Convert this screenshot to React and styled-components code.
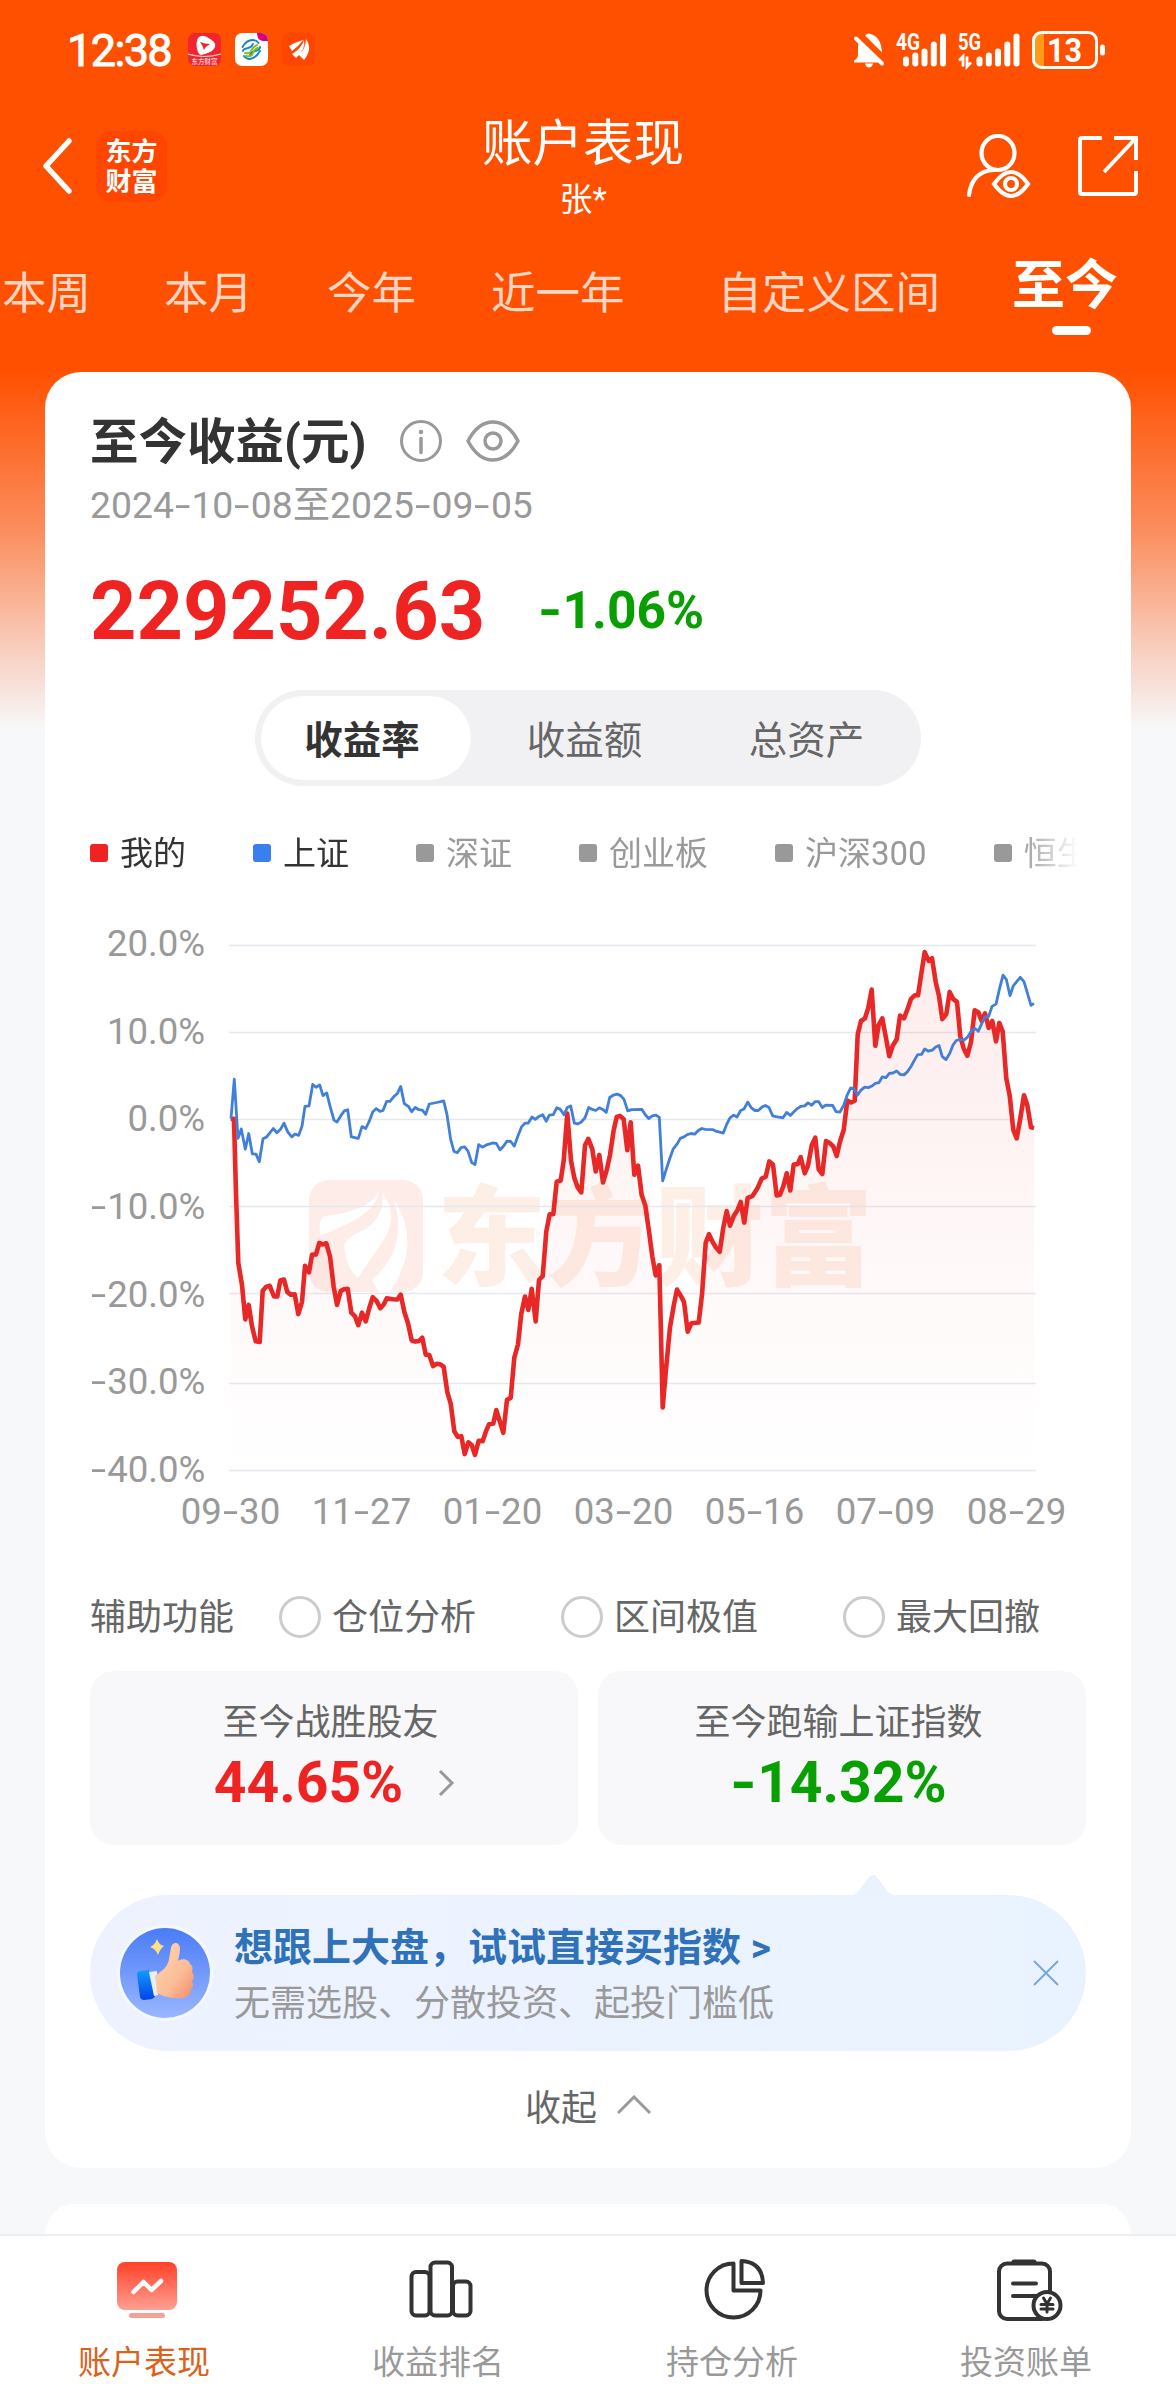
import React from 'react'
import styled, { createGlobalStyle } from 'styled-components'

const GlobalStyle=createGlobalStyle`
*{
    box-sizing:border-box;
}
body{
    margin:0;
    background:#f7f8fa;
    font-family:Roboto,'Noto Sans CJK SC',sans-serif;
}
svg{
    display:block;
    flex:none;
}
`
const Page=styled.div`
    display:flex;
    flex-direction:column;
    width:1176px;
    height:2400px;
    overflow:hidden;
    background:linear-gradient(#ff5000 370px,#fb8d5d 530px,#f8d5c8 662px,#f7f8fa 730px);
`
const StatusBar=styled.div`
    display:flex;
    align-items:center;
    justify-content:space-between;
    height:99px;
    padding:0 70px 0 67px;
    color:#fff;
`
const StatusGroup=styled.div`
    display:flex;
    align-items:center;
    gap:${props=>props.gap}px;
`
const Clock=styled.span`
    width:108px;
    font-size:45px;
    letter-spacing:-1.6px;
    -webkit-text-stroke:1px #fff;
    padding-top:1px;
`
const NavBar=styled.header`
    display:grid;
    grid-template-columns:1fr auto 1fr;
    align-items:center;
    height:134px;
    padding:0 37px 0 43px;
    color:#fff;
`
const NavSide=styled.div`
    display:flex;
    align-items:center;
    justify-content:${props=>props.end?'flex-end':'flex-start'};
    gap:${props=>props.end?46:22}px;
`
const Brand=styled.div`
    width:71px;
    height:71px;
    border-radius:15px;
    background:#ff4600;
    display:flex;
    flex-direction:column;
    align-items:center;
    justify-content:center;
    font-family:'Noto Sans CJK SC',sans-serif;
    font-size:26px;
    font-weight:700;
    line-height:30px;
    padding-bottom:2px;
`
const NavTitle=styled.div`
    display:flex;
    flex-direction:column;
    align-items:center;
    padding:12px 16px 0 0;
`
const Title=styled.h1`
    margin:0;
    font-size:50.500px;
    font-weight:400;
    line-height:58px;
`
const Subtitle=styled.span`
    margin-top:-2px;
    font-size:33px;
    line-height:58px;
`
const Tabs=styled.nav`
    display:flex;
    height:139px;
    padding:34px 0 0 2px;
    color:#ffd6c3;
    white-space:nowrap;
`
const Tab=styled.span`
    font-size:44.500px;
    line-height:54px;
    margin-right:${props=>props.space||74}px;
`
const ActiveTab=styled.span`
    display:flex;
    flex-direction:column;
    align-items:center;
    font-size:53px;
    font-weight:700;
    line-height:54px;
    margin-top:-8px;
    color:#fff;
    &::after{
        content:'';
        width:39px;
        height:9px;
        border-radius:5px;
        margin-top:13px;
        margin-left:13px;
        background:#fff;
    }
`
const Card=styled.section`
    display:flex;
    flex-direction:column;
    flex:none;
    height:1796px;
    margin:0 45px;
    padding:41px 45px 0;
    border-radius:36px;
    background:#fff;
`
const CardHead=styled.div`
    display:flex;
    align-items:center;
    height:56px;
    gap:24px;
`
const CardTitle=styled.h2`
    margin:-7px 10px 0 0;
    font-size:48.500px;
    font-weight:700;
    color:#333;
    white-space:nowrap;
`
const Period=styled.div`
    margin-top:11px;
    font-size:37.300px;
    line-height:50px;
    color:#999;
`
const Dash=styled.span`
    display:inline-block;
    width:.47em;
    text-align:center;
    transform:scaleX(${props=>props.bold?1.2:1.5});
`
const AmountRow=styled.div`
    display:flex;
    align-items:center;
    height:90px;
    margin-top:36px;
    gap:53px;
`
const Amount=styled.span`
    font-size:81px;
    font-weight:700;
    color:#f02323;
`
const Rate=styled.span`
    font-size:${props=>props.size}px;
    font-weight:700;
    line-height:1.2;
    color:${props=>props.up?'#f02323':'#08a000'};
`
const Segments=styled.div`
    display:flex;
    align-self:center;
    width:666px;
    height:96px;
    margin-top:34px;
    padding:6px;
    border-radius:48px;
    background:#f1f1f4;
`
const Segment=styled.div`
    display:flex;
    align-items:center;
    justify-content:center;
    width:${props=>props.active?210:222}px;
    padding:${props=>props.active?'0 8px 3px 0':'0 0 3px 5px'};
    border-radius:42px;
    font-size:38.500px;
    font-weight:${props=>props.active?700:400};
    color:${props=>props.active?'#333':'#666'};
    background:${props=>props.active?'#fff':'none'};
`
const Legend=styled.div`
    display:flex;
    align-items:center;
    gap:67px;
    height:50px;
    margin-top:42px;
    overflow:hidden;
    mask-image:linear-gradient(90deg,#000 930px,transparent 988px);
`
const LegendItem=styled.div`
    display:flex;
    align-items:center;
    flex:none;
    gap:12px;
    font-size:33px;
    line-height:46px;
    padding-top:2px;
    color:${props=>props.on?'#333':'#999'};
    &::before{
        content:'';
        width:18px;
        height:18px;
        margin-top:-2px;
        border-radius:3px;
        background:${props=>props.mark||'#999'};
    }
`
const Chart=styled.div`
    display:flex;
    height:570px;
    margin-top:44px;
`
const YAxis=styled.div`
    display:flex;
    flex-direction:column;
    justify-content:space-between;
    width:115px;
    text-align:right;
    font-size:36.600px;
    line-height:44px;
    color:#999;
    white-space:nowrap;
`
const XAxis=styled.div`
    display:grid;
    grid-template-columns:repeat(7,131px);
    margin-left:75px;
    text-align:center;
    font-size:36.600px;
    line-height:39px;
    height:38px;
    color:#999;
`
const Watermark=styled.text`
    font-family:'Noto Sans CJK SC',sans-serif;
    font-size:109px;
    font-weight:900;
    fill:#fdeee6;
`
const Tools=styled.div`
    display:flex;
    align-items:center;
    height:54px;
    margin-top:60px;
    font-size:36px;
    line-height:50px;
    color:#666;
`
const ToolsLabel=styled.span`
    flex:none;
    width:189px;
    padding-top:2px;
`
const Radio=styled.label`
    display:flex;
    align-items:center;
    flex:none;
    width:282px;
    gap:11px;
    padding-top:2px;
    white-space:nowrap;
    &:last-child{
        width:auto;
    }
    &::before{
        content:'';
        width:36px;
        height:36px;
        margin-top:-2px;
        border:3px solid #ccc;
        border-radius:50%;
    }
`
const Stats=styled.div`
    display:flex;
    gap:20px;
    margin-top:27px;
`
const Stat=styled.div`
    display:flex;
    flex-direction:column;
    align-items:center;
    flex:1;
    height:174px;
    padding:26px 7px 0 0;
    border-radius:24px;
    background:#f8f8fa;
    font-size:36px;
    line-height:52px;
    color:#666;
`
const StatValue=styled.div`
    display:flex;
    align-items:center;
    gap:35px;
    padding-left:8px;
`
const Banner=styled.div`
    position:relative;
    display:flex;
    align-items:center;
    height:156px;
    margin-top:50px;
    padding:0 27px 0 27px;
    border-radius:78px;
    background:linear-gradient(90deg,#eef2ff,#e9f3ff);
`
const Pointer=styled.svg`
    position:absolute;
    left:763px;
    top:-20px;
`
const BannerText=styled.div`
    flex:1;
    margin-left:21px;
    padding-top:7px;
`
const BannerTitle=styled.div`
    font-size:39px;
    font-weight:700;
    line-height:56px;
    color:#3072ba;
`
const BannerNote=styled.div`
    font-size:36px;
    line-height:57px;
    color:#999;
`
const Collapse=styled.div`
    display:flex;
    align-items:center;
    justify-content:center;
    height:60px;
    margin-top:24px;
    gap:20px;
    font-size:36px;
    color:#666;
`
const NextCard=styled.section`
    flex:none;
    height:30px;
    margin:36px 45px 0;
    border-radius:36px 36px 0 0;
    background:#fff;
`
const TabBar=styled.footer`
    display:grid;
    grid-template-columns:repeat(4,1fr);
    flex:1;
    border-top:2px solid #eee;
    background:#fff;
`
const TabItem=styled.div`
    display:flex;
    flex-direction:column;
    align-items:center;
    padding-top:18px;
    font-size:33px;
    line-height:48px;
    color:${props=>props.active?'#d9621c':'#999'};
    svg{
        overflow:visible;
    }
    span{
        margin:21px 6px 0 0;
    }
`

const tabs=[['本周',73],['本月'],['今年',75],['近一年',93],['自定义区间',72]]
const legend=[
    {name:'我的',mark:'#f02323',on:true},
    {name:'上证',mark:'#3a7fee',on:true},
    {name:'深证'},
    {name:'创业板'},
    {name:'沪深300'},
    {name:'恒生'}
]
const yLabels=['20.0%','10.0%','0.0%','-10.0%','-20.0%','-30.0%','-40.0%']
const xLabels=['09-30','11-27','01-20','03-20','05-16','07-09','08-29']
const gridLines=[35.5,122.5,209.5,296.5,383.5,473.5,560.5]

const mine=[92,546,102,546,108,740,115,922,126,980,136,1070,146,1032,156,1088,167,1127,179,1129,188,995,198,985,209,982,222,1010,232,1010,241,968,252,966,262,998,272,1005,284,1004,295,1056,306,1024,315,930,327,947,336,901,348,900,358,870,368,874,379,871,390,905,401,985,411,1032,422,996,432,991,443,990,454,1052,465,1062,475,1085,486,1052,497,1075,508,1040,518,1012,530,1022,541,1041,551,1031,560,1015,580,1017,592,1018,602,1005,613,1050,624,1080,635,1125,646,1128,657,1126,667,1118,677,1162,688,1163,699,1192,710,1186,722,1188,731,1194,742,1260,752,1290,763,1362,773,1377,784,1375,794,1422,805,1391,815,1398,825,1424,836,1387,848,1388,858,1362,867,1344,880,1342,889,1307,900,1338,910,1366,921,1280,932,1275,943,1170,954,1135,964,1055,975,1010,985,1045,995,990,1007,1075,1017,967,1028,957,1039,840,1049,795,1060,795,1070,710,1082,707,1091,655,1102,532,1113,655,1123,700,1133,725,1144,738,1155,615,1165,598,1177,625,1187,683,1198,640,1209,712,1220,680,1230,640,1241,575,1250,541,1260,538,1271,547,1282,628,1292,555,1303,692,1314,668,1325,745,1336,772,1347,840,1357,905,1367,955,1378,928,1383,1110,1388,1300,1398,1200,1410,1090,1422,1030,1431,992,1442,1008,1452,1024,1463,1102,1474,1080,1496,1078,1506,1005,1517,870,1527,847,1538,868,1548,882,1559,893,1570,830,1580,787,1590,825,1602,798,1612,785,1622,763,1633,817,1643,752,1657,748,1672,728,1685,702,1697,697,1708,657,1719,665,1730,746,1740,744,1750,722,1760,688,1771,733,1781,665,1793,664,1802,646,1814,688,1824,668,1835,615,1846,595,1856,678,1867,690,1878,604,1888,608,1900,618,1910,643,1920,605,1931,575,1942,498,1953,503,1964,498,1973,325,1983,290,1995,283,2005,255,2015,208,2026,355,2036,300,2047,283,2058,335,2068,382,2078,355,2090,338,2100,276,2112,283,2123,258,2133,232,2144,223,2154,223,2165,160,2174,110,2186,133,2196,126,2207,188,2217,225,2227,285,2239,272,2249,214,2259,232,2271,240,2281,330,2291,362,2302,381,2313,345,2324,262,2335,267,2345,290,2355,270,2366,308,2377,290,2388,343,2398,295,2408,318,2419,440,2429,485,2440,575,2450,597,2461,545,2472,484,2482,510,2493,568,2502,570]
const index=[93,545,103,442,114,597,124,572,136,625,146,584,157,637,168,638,178,658,189,598,200,593,210,582,220,571,231,582,241,574,252,557,263,580,275,593,285,586,296,589,306,565,315,513,327,512,338,456,348,463,359,457,369,485,380,478,391,515,402,549,411,554,422,538,433,525,443,522,454,593,475,597,486,566,497,571,508,552,518,528,529,519,540,526,549,524,560,500,570,500,582,487,592,480,602,461,613,506,625,513,635,527,646,516,656,522,667,523,677,534,688,507,710,503,731,499,741,535,752,600,762,631,772,634,783,621,794,619,804,630,815,660,825,665,836,613,847,620,862,613,878,609,889,610,900,627,911,617,921,604,932,605,943,617,954,590,965,566,975,557,985,557,996,541,1006,547,1016,540,1028,535,1039,552,1048,536,1060,535,1070,517,1081,521,1092,535,1102,516,1112,512,1123,557,1134,559,1144,554,1155,543,1166,516,1177,521,1187,524,1198,517,1208,521,1219,529,1229,490,1240,484,1252,481,1262,485,1272,495,1283,525,1295,522,1326,521,1336,535,1346,545,1357,538,1368,536,1378,542,1388,708,1398,680,1409,650,1420,624,1431,612,1441,597,1452,593,1462,587,1473,584,1484,586,1494,577,1505,571,1516,573,1538,574,1548,578,1570,583,1580,560,1590,543,1601,536,1611,541,1622,524,1632,520,1643,502,1654,517,1665,524,1675,524,1686,515,1696,511,1707,516,1718,538,1728,540,1749,543,1760,529,1771,537,1781,528,1792,519,1803,513,1814,512,1824,504,1835,510,1845,501,1856,501,1867,516,1877,510,1898,511,1908,527,1920,528,1931,510,1942,483,1952,465,1962,467,1972,484,1983,471,1994,463,2005,464,2016,460,2026,453,2037,451,2047,436,2058,438,2068,427,2079,426,2090,421,2101,430,2112,431,2122,423,2133,409,2144,391,2153,378,2165,377,2174,363,2185,369,2197,366,2207,358,2217,354,2227,383,2238,391,2249,375,2259,353,2269,341,2280,338,2292,340,2302,333,2312,319,2324,309,2335,317,2345,297,2355,279,2366,278,2376,252,2388,246,2398,208,2409,170,2419,181,2430,224,2440,198,2450,187,2461,176,2472,187,2483,220,2493,249,2502,244]

// samples are flat x,y pairs, three units per pixel across and 2.6133 down
const toPoints=(samples)=>{
    const points=[]
    for(let i=0;i<samples.length;i+=2){
        points.push((samples[i]/3).toFixed(1)+','+(samples[i+1]/2.6133).toFixed(1))
    }
    return points.join(' ')
}

const Num=({children,bold})=>children.split(/(-)/).map((part,i)=>(
    part==='-'?<Dash key={i} bold={bold}>-</Dash>:part
))

const SignalBars=({x})=>[
    [0,23],[9.3,19],[18.5,15],[27.8,8],[37,0]
].map(([dx,top])=>(
    <rect key={dx} x={x+dx} y={top} width="6" height={33-top} rx="3" fill="#fff"/>
))

const StatusApps=()=>(
    <svg width="128" height="33" viewBox="0 0 128 33">
        <rect width="33" height="33" rx="7" fill="#f0252d"/>
        <path d="M10 5c4-4 8-2 12 1 4 2 6 5 5 8-2 5-9 7-14 8-4-1-6-12-3-17z" fill="#fff"/>
        <path d="M12 9q5 2 10 2-4 2-6 6-1-4-4-8z" fill="#f0252d"/>
        <path d="M0 21q16 5 33 0" fill="none" stroke="#ffd0c8" strokeWidth="1.200"/>
        <text x="16.500" y="31" fontSize="6.500" fill="#fff" textAnchor="middle">东方财富</text>
        <rect x="47" width="33" height="33" rx="7" fill="#fff"/>
        <path d="M69 0h4a7 7 0 0 1 7 7v1h-5q-6-1-6-8z" fill="#d5007f"/>
        <g fill="none" strokeWidth="1.900" strokeLinecap="round">
            <path d="M54.500 14q4-7 10-7 4 0 6 3M55 18q0-2 5-3 4-1 5-4M72 18q-4 7-10 8-4 0-6-3M72 14q0 3-5 4-4 1-5 4" stroke="#1585c8"/>
            <path d="M57 20q5 1 6-2t6-6M58 23q6 1 7-3t5-5" stroke="#7dbb2b"/>
        </g>
        <rect x="94" width="33" height="33" rx="7" fill="#ff4600"/>
        <path d="M101 13q7-4 14-6-4 6-11 11zM104 21q9-5 12-14 2 9-8 18zM118 6q7 10-2 21l-5-5q7-7 7-16z" fill="#fff"/>
    </svg>
)

const StatusIcons=()=>(
    <svg width="252" height="48" viewBox="0 -7.500 252 48">
        <path d="M11 2q2-2 4-2l3 1q9 3 10 18zM6 8l21 21H0v-2q4-2 4-6V13q0-3 2-5zM11 30h8q-1 4-4 4t-4-4z" fill="#fff"/>
        <path d="M2 5l26 25" stroke="#fff" strokeWidth="4" strokeLinecap="round"/>
        <g fill="#fff" fontSize="23" fontWeight="700">
            <text x="42" y="16.500" textLength="24" lengthAdjust="spacingAndGlyphs">4G</text>
            <text x="104" y="16.500" textLength="23" lengthAdjust="spacingAndGlyphs">5G</text>
        </g>
        <SignalBars x={49}/>
        <SignalBars x={122.5}/>
        <path d="M105 27l4-4v10M113 23v10l4-4" fill="none" stroke="#fff" strokeWidth="2.800"/>
        <path d="M190 0h-4q-5 1-5 7v19q0 6 5 7h4z" fill="#ff9b19"/>
        <rect x="179.500" y="-1" width="63" height="35" rx="8" fill="none" stroke="#fff" strokeWidth="3"/>
        <rect x="246" y="11" width="5" height="11" rx="2.500" fill="#fff"/>
        <text x="193" y="28" fontSize="33" fontWeight="700" fill="#fff" textLength="35" lengthAdjust="spacingAndGlyphs">13</text>
    </svg>
)

const PerformanceIcon=()=>(
    <svg width="64" height="64" viewBox="0 0 64 64">
        <defs>
            <linearGradient id="screen" x1="0" y1="0" x2="0" y2="1">
                <stop offset="0" stopColor="#ff4127"/>
                <stop offset="1" stopColor="#ff9f93"/>
            </linearGradient>
        </defs>
        <rect x="2" y="8" width="60" height="48" rx="8" fill="url(#screen)"/>
        <rect x="14" y="59" width="36" height="5" rx="2.500" fill="#f4a294"/>
        <path d="M18.500 38l10-10 8 8L46 27" fill="none" stroke="#fff" strokeWidth="4.500" strokeLinecap="round" strokeLinejoin="round"/>
    </svg>
)
const RankIcon=()=>(
    <svg width="64" height="64" viewBox="0 0 64 64" fill="none" stroke="#333" strokeWidth="4">
        <rect x="2.500" y="18" width="18" height="43.500" rx="4.500"/>
        <rect x="21.500" y="8.500" width="21.500" height="53" rx="4.500"/>
        <rect x="44" y="27.500" width="17.500" height="34" rx="4.500"/>
    </svg>
)
const HoldingsIcon=()=>(
    <svg width="64" height="64" viewBox="0 0 64 64" fill="none" stroke="#333" strokeWidth="4" strokeLinejoin="round">
        <path d="M30.500 9.500v27H57.500A27 27 0 1 1 30.500 9.500z"/>
        <path d="M38.500 7v22H60Q59 8 38.500 7z"/>
    </svg>
)
const BillIcon=()=>(
    <svg width="68" height="64" viewBox="0 0 68 64" fill="none" stroke="#333" strokeWidth="4" strokeLinecap="round">
        <rect x="4" y="9.500" width="51" height="55.500" rx="8"/>
        <path d="M19 8h20" strokeWidth="5"/>
        <path d="M18 29.500h23M18 42h23"/>
        <circle cx="52" cy="51.500" r="13.500" fill="#fff"/>
        <path d="M48.500 44l3.500 6 3.500-6M52 50v8M46 50.500h12M46 55h12" strokeWidth="3"/>
    </svg>
)
const ThumbIcon=()=>(
    <svg width="96" height="96" viewBox="0 0 96 96">
        <defs>
            <linearGradient id="disc" x1="0" y1="0" x2="0" y2="1">
                <stop offset="0" stopColor="#4a7cf8"/>
                <stop offset="1" stopColor="#9ab6ff"/>
            </linearGradient>
            <linearGradient id="skin" x1="0" y1="0" x2="1" y2="1">
                <stop offset="0" stopColor="#ffd9b5"/>
                <stop offset=".6" stopColor="#fcbd97"/>
                <stop offset="1" stopColor="#f08a68"/>
            </linearGradient>
            <linearGradient id="cuff" x1="0" y1="0" x2="0" y2="1">
                <stop offset="0" stopColor="#119bff"/>
                <stop offset="1" stopColor="#0443e6"/>
            </linearGradient>
        </defs>
        <circle cx="48" cy="48" r="48" fill="#f4f9ff"/>
        <circle cx="48" cy="48" r="45" fill="url(#disc)"/>
        <path d="M20 49q0-2 3-3l9-1 6 27-3 2-8 1q-3 0-4-3z" fill="url(#cuff)"/>
        <path d="M32 47l8-1 1 24-4 1z" fill="#e9efff"/>
        <path d="M38 51C45 46 51 42 52 34l2-11c1-6 8-7 9 0 0 5-1 8-2 13 4-3 11-2 12 3 3 2 3 5 2 8 3 3 2 7 0 9 2 3 1 7-1 8 0 6-3 8-9 9-9 1-18-1-25-5z" fill="url(#skin)"/>
        <path d="M40 14q2 6 7 7-4 3-6 9-2-6-8-8 5-2 7-8z" fill="#ffdf85"/>
    </svg>
)

export default function App() {
    return (
        <Page>
            <GlobalStyle/>
            <StatusBar>
                <StatusGroup gap={13}>
                    <Clock>12:38</Clock>
                    <StatusApps/>
                </StatusGroup>
                <StatusIcons/>
            </StatusBar>
            <NavBar>
                <NavSide>
                    <svg width="31" height="56" viewBox="0 0 31 56" fill="none" stroke="#fff" strokeWidth="5.500" strokeLinecap="round" strokeLinejoin="round">
                        <path d="M26 3L3 28l23 25"/>
                    </svg>
                    <Brand><span>东方</span><span>财富</span></Brand>
                </NavSide>
                <NavTitle>
                    <Title>账户表现</Title>
                    <Subtitle>张*</Subtitle>
                </NavTitle>
                <NavSide end>
                    <svg width="66" height="64" viewBox="0 0 66 64" fill="none" stroke="#fff" strokeWidth="4.200" strokeLinecap="round">
                        <ellipse cx="33" cy="19" rx="16.500" ry="17"/>
                        <path d="M4 61q3-24 25-25M29 50q17-24 34 0-17 24-34 0z"/>
                        <circle cx="46" cy="50" r="6"/>
                    </svg>
                    <svg width="62" height="62" viewBox="0 0 62 62" fill="none" stroke="#fff" strokeWidth="4">
                        <path d="M25 3H5q-2 0-2 2v52q0 2 2 2h52q2 0 2-2V36M37 3h22v22M58 4L27 37"/>
                    </svg>
                </NavSide>
            </NavBar>
            <Tabs>
                {tabs.map(([name,space])=><Tab key={name} space={space}>{name}</Tab>)}
                <ActiveTab>至今</ActiveTab>
            </Tabs>
            <Card>
                <CardHead>
                    <CardTitle>至今收益(元)</CardTitle>
                    <svg width="42" height="42" viewBox="0 0 42 42" fill="none" stroke="#999" strokeWidth="3" strokeLinecap="round">
                        <circle cx="21" cy="21" r="19.500"/>
                        <path d="M21 18.500v14" strokeWidth="3.500"/>
                        <circle cx="21" cy="12" r="1" strokeWidth="2.500"/>
                    </svg>
                    <svg width="54" height="42" viewBox="0 0 54 42" fill="none" stroke="#999" strokeWidth="3.500">
                        <path d="M2 21Q12 2 27 2t25 19Q42 40 27 40T2 21z" strokeLinejoin="round"/>
                        <circle cx="27" cy="21" r="8"/>
                    </svg>
                </CardHead>
                <Period><Num>2024-10-08至2025-09-05</Num></Period>
                <AmountRow>
                    <Amount>229252.63</Amount>
                    <Rate size={51.5}><Num bold>-1.06%</Num></Rate>
                </AmountRow>
                <Segments>
                    <Segment active>收益率</Segment>
                    <Segment>收益额</Segment>
                    <Segment>总资产</Segment>
                </Segments>
                <Legend>
                    {legend.map(({name,mark,on})=><LegendItem key={name} mark={mark} on={on}>{name}</LegendItem>)}
                </Legend>
                <Chart>
                    <YAxis>
                        {yLabels.map(label=><span key={label}><Num>{label}</Num></span>)}
                    </YAxis>
                    <svg width="881" height="570" viewBox="5 12 881 570">
                        <defs>
                            <linearGradient id="area" gradientUnits="userSpaceOnUse" x1="0" y1="40" x2="0" y2="560">
                                <stop offset="0" stopColor="#f02323" stopOpacity=".09"/>
                                <stop offset=".5" stopColor="#f02323" stopOpacity=".04"/>
                                <stop offset="1" stopColor="#f02323" stopOpacity="0"/>
                            </linearGradient>
                        </defs>
                        <rect x="109" y="270" width="114" height="112" rx="20" fill="#fdece7"/>
                        <path d="M120 326q-2-16 4-20 46-5 55-25-1 16-26 30-20 10-33 15zM144 336q2-9 20-16 22-14 18-38 17 22 2 48-10 14-26 38-12-10-14-32zM193 288q32 46-7 100-10-8-14-18 38-34 21-82z" fill="#fff"/>
                        <Watermark x="237" y="367">东方财富</Watermark>
                        {gridLines.map(y=><path key={y} d={`M29 ${y}H836`} stroke="#e6e8ef" strokeWidth="1.300"/>)}
                        <polygon points={`30.7,560 ${toPoints(mine)} 834,560`} fill="url(#area)"/>
                        <polyline points={toPoints(mine)} fill="none" stroke="#e82727" strokeWidth="4.600" strokeLinejoin="round"/>
                        <polyline points={toPoints(index)} fill="none" stroke="#417fd9" strokeWidth="2.800" strokeLinejoin="round"/>
                    </svg>
                </Chart>
                <XAxis>
                    {xLabels.map(label=><span key={label}><Num>{label}</Num></span>)}
                </XAxis>
                <Tools>
                    <ToolsLabel>辅助功能</ToolsLabel>
                    <Radio>仓位分析</Radio>
                    <Radio>区间极值</Radio>
                    <Radio>最大回撤</Radio>
                </Tools>
                <Stats>
                    <Stat>
                        至今战胜股友
                        <StatValue>
                            <Rate size={57} up>44.65%</Rate>
                            <svg width="17" height="28" viewBox="0 0 17 28" fill="none" stroke="#999" strokeWidth="3">
                                <path d="M2 2l12 12L2 26"/>
                            </svg>
                        </StatValue>
                    </Stat>
                    <Stat>
                        至今跑输上证指数
                        <Rate size={57}><Num bold>-14.32%</Num></Rate>
                    </Stat>
                </Stats>
                <Banner>
                    <Pointer width="40" height="20" viewBox="0 0 40 20">
                        <path d="M0 20Q4 19 8 13L16 2q4-4 8 0l8 11q4 6 8 7z" fill="#ebf2ff"/>
                    </Pointer>
                    <ThumbIcon/>
                    <BannerText>
                        <BannerTitle>想跟上大盘，试试直接买指数 &gt;</BannerTitle>
                        <BannerNote>无需选股、分散投资、起投门槛低</BannerNote>
                    </BannerText>
                    <svg width="26" height="26" viewBox="0 0 26 26" stroke="#79a8da" strokeWidth="2">
                        <path d="M1 1l24 24M25 1L1 25"/>
                    </svg>
                </Banner>
                <Collapse>
                    收起
                    <svg width="34" height="20" viewBox="0 0 34 20" fill="none" stroke="#999" strokeWidth="3">
                        <path d="M1 18L17 2l16 16"/>
                    </svg>
                </Collapse>
            </Card>
            <NextCard/>
            <TabBar>
                <TabItem active><PerformanceIcon/><span>账户表现</span></TabItem>
                <TabItem><RankIcon/><span>收益排名</span></TabItem>
                <TabItem><HoldingsIcon/><span>持仓分析</span></TabItem>
                <TabItem><BillIcon/><span>投资账单</span></TabItem>
            </TabBar>
        </Page>
    )
}
